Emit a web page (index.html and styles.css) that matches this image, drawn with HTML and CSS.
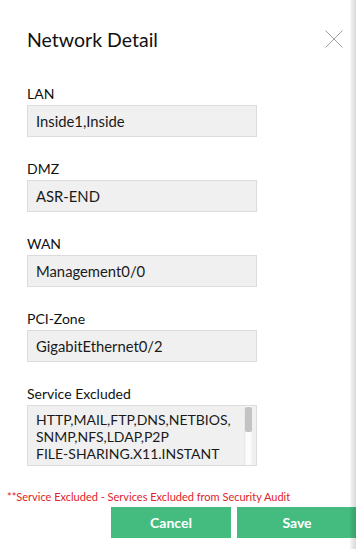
FILE: index.html
```html
<!DOCTYPE html>
<html lang="en">
<head>
<meta charset="utf-8">
<title>Network Detail</title>
<link rel="stylesheet" href="styles.css">
</head>
<body>
<div class="modal">
  <div class="header">
    <h1 class="title">Network Detail</h1>
    <button class="close" aria-label="Close">
      <svg width="18" height="18" viewBox="0 0 18 18"><path d="M0.5 0.5 L17.5 17.5 M17.5 0.5 L0.5 17.5" stroke="#a0a0a0" stroke-width="1" fill="none"/></svg>
    </button>
  </div>
  <div class="form">
    <div class="field">
      <label class="label">LAN</label>
      <div class="value">Inside1,Inside</div>
    </div>
    <div class="field">
      <label class="label">DMZ</label>
      <div class="value">ASR-END</div>
    </div>
    <div class="field">
      <label class="label">WAN</label>
      <div class="value">Management0/0</div>
    </div>
    <div class="field">
      <label class="label">PCI-Zone</label>
      <div class="value">GigabitEthernet0/2</div>
    </div>
    <div class="field last">
      <label class="label">Service Excluded</label>
      <div class="services-wrap">
        <textarea class="services" readonly>HTTP,MAIL,FTP,DNS,NETBIOS,
SNMP,NFS,LDAP,P2P
FILE-SHARING.X11.INSTANT
MESSAGING,STREAMING
MEDIA,DATABASE,VOIP,
RPC,TELNET,SSH,SMB,
NTP,ICMP</textarea>
        <div class="scrollbar"><div class="thumb"></div></div>
      </div>
    </div>
  </div>
  <p class="note">**Service Excluded - Services Excluded from Security Audit</p>
  <div class="actions">
    <button class="btn">Cancel</button>
    <button class="btn">Save</button>
  </div>
</div>
</body>
</html>
```

FILE: styles.css
```css
html, body {
  margin: 0;
  padding: 0;
}
body {
  width: 356px;
  height: 549px;
  overflow: hidden;
  background: #ffffff;
  font-family: Lato, "Open Sans", Arial, sans-serif;
  color: #1a1a1a;
}
body::after {
  content: "";
  position: fixed;
  top: 0;
  right: 0;
  width: 6px;
  height: 100%;
  background: linear-gradient(to right, rgba(0,0,0,0.03), rgba(0,0,0,0.15));
  pointer-events: none;
}
.modal {
  padding-top: 28px;
}
.header {
  display: flex;
  justify-content: space-between;
  align-items: flex-start;
  padding: 0 13px 0 27px;
}
.title {
  margin: 0;
  font-size: 19.5px;
  line-height: 23px;
  font-weight: 400;
  color: #111;
}
.close {
  margin: 2px 0 0 0;
  padding: 0;
  border: 0;
  background: none;
  width: 18px;
  height: 18px;
  display: block;
}
.close svg {
  display: block;
}
.form {
  margin-top: 34px;
  padding-left: 27px;
}
.field {
  margin-bottom: 23px;
}
.field.last {
  margin-bottom: 0;
}
.label {
  display: block;
  font-size: 14px;
  line-height: 17px;
  margin-bottom: 3px;
  color: #111;
}
.value {
  box-sizing: border-box;
  width: 230px;
  height: 32px;
  border: 1px solid #dcdcdc;
  background: #f0f0f0;
  padding: 0 8px;
  display: flex;
  align-items: center;
  font-size: 14.8px;
  color: #1a1a1a;
}
.services-wrap {
  position: relative;
  width: 230px;
}
.services {
  box-sizing: border-box;
  display: block;
  width: 230px;
  height: 61px;
  margin: 0;
  border: 1px solid #dcdcdc;
  background: #f0f0f0;
  padding: 6px 20px 6px 8px;
  font-family: Lato, "Open Sans", Arial, sans-serif;
  font-size: 14px;
  line-height: 16.8px;
  color: #1a1a1a;
  resize: none;
  outline: none;
  white-space: pre;
  overflow: hidden;
}
.scrollbar {
  position: absolute;
  top: 1px;
  right: 5px;
  width: 8px;
  height: 59px;
  background: linear-gradient(to right, #f3f3f3, #fdfdfd 30%, #fdfdfd 70%, #f3f3f3);
  border-left: 1px solid #e8e8e8;
  box-sizing: border-box;
}
.thumb {
  width: 7px;
  height: 25px;
  margin-top: 1px;
  background: #c3c3c3;
  border-radius: 2px;
}
.note {
  margin: 24px 0 0 0;
  padding-left: 7px;
  font-size: 11px;
  line-height: 14px;
  color: #e0232b;
}
.actions {
  display: flex;
  gap: 6px;
  margin-top: 3px;
  padding-left: 111px;
}
.btn {
  flex: none;
  width: 120px;
  height: 31px;
  border: 0;
  padding: 0;
  background: #45bc7f;
  color: #ffffff;
  font-family: Lato, "Open Sans", Arial, sans-serif;
  font-size: 14px;
  font-weight: 700;
}
```
